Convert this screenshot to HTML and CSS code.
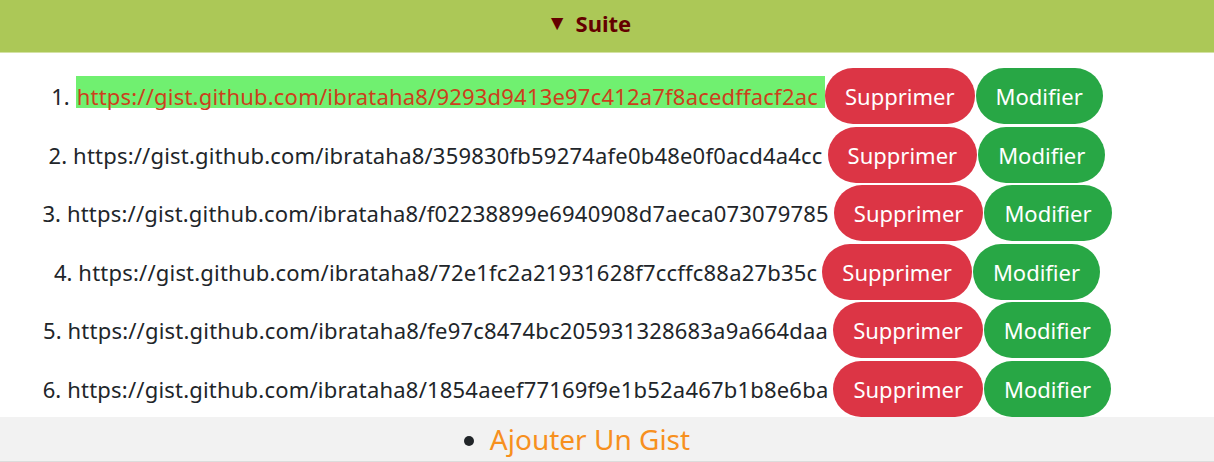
FILE: index.html
```html
<!DOCTYPE html>
<html lang="fr">
<head>
<meta charset="utf-8">
<title>Gists</title>
<link rel="stylesheet" href="styles.css">
</head>
<body>
<header class="bar">
  <span class="bar-title"><span class="caret">▼</span>Suite</span>
</header>
<ol class="gists">
  <li class="gist">
    <span class="num">1.</span>
    <a class="url active" href="#">https://gist.github.com/ibrataha8/9293d9413e97c412a7f8acedffacf2ac</a>
    <button class="btn btn-del">Supprimer</button>
    <button class="btn btn-edit">Modifier</button>
  </li>
  <li class="gist">
    <span class="num">2.</span>
    <span class="url">https://gist.github.com/ibrataha8/359830fb59274afe0b48e0f0acd4a4cc</span>
    <button class="btn btn-del">Supprimer</button>
    <button class="btn btn-edit">Modifier</button>
  </li>
  <li class="gist">
    <span class="num">3.</span>
    <span class="url">https://gist.github.com/ibrataha8/f02238899e6940908d7aeca073079785</span>
    <button class="btn btn-del">Supprimer</button>
    <button class="btn btn-edit">Modifier</button>
  </li>
  <li class="gist">
    <span class="num">4.</span>
    <span class="url">https://gist.github.com/ibrataha8/72e1fc2a21931628f7ccffc88a27b35c</span>
    <button class="btn btn-del">Supprimer</button>
    <button class="btn btn-edit">Modifier</button>
  </li>
  <li class="gist">
    <span class="num">5.</span>
    <span class="url">https://gist.github.com/ibrataha8/fe97c8474bc205931328683a9a664daa</span>
    <button class="btn btn-del">Supprimer</button>
    <button class="btn btn-edit">Modifier</button>
  </li>
  <li class="gist">
    <span class="num">6.</span>
    <span class="url">https://gist.github.com/ibrataha8/1854aeef77169f9e1b52a467b1b8e6ba</span>
    <button class="btn btn-del">Supprimer</button>
    <button class="btn btn-edit">Modifier</button>
  </li>
</ol>
<footer class="add">
  <span class="dot"></span>
  <a class="add-link" href="#">Ajouter Un Gist</a>
</footer>
</body>
</html>
```
FILE: styles.css
```css
* { box-sizing: border-box; }
html, body { margin: 0; padding: 0; }
body {
  font-family: "Noto Sans", "Open Sans", sans-serif;
  color: #212529;
  background: #fff;
}
.bar {
  height: 53px;
  background: #acc857;
  border-bottom: 1px solid #d4e2a4;
  display: flex;
  align-items: center;
  justify-content: center;
  padding: 0 36px 7px 0;
}
.bar-title {
  font-weight: 700;
  font-size: 22px;
  color: #640000;
  display: flex;
  align-items: center;
}
.caret { font-size: 21px; margin-right: 8px; position: relative; top: -1px; }
.gists {
  list-style: none;
  margin: 0;
  padding: 15px 60px 0 0;
  display: flex;
  flex-direction: column;
  gap: 2.6px;
}
.gist {
  display: flex;
  align-items: center;
  justify-content: center;
  height: 56px;
  font-size: 22px;
  line-height: 32px;
}
.num { margin-right: 6px; }
.url {
  color: #212529;
  text-decoration: none;
  letter-spacing: 0.2px;
  margin-right: 5px;
}
.url.active {
  background: #70f070;
  color: #cc3f1c;
  line-height: 24px;
  padding: 8px 7px 0 1px;
  margin: 0 0 8px 0;
}
.btn {
  font-family: inherit;
  font-size: 22px;
  color: #fff;
  border: none;
  height: 56px;
  border-radius: 28px;
  padding: 0 20px;
  margin: 0;
}
.btn-del { background: #dc3545; }
.btn-edit { background: #28a745; margin-left: 1px; }
.add {
  background: #f2f2f2;
  border-bottom: 1px solid #dcdcdc;
  height: 45px;
  display: flex;
  align-items: center;
  justify-content: center;
  padding-right: 60px;
  font-size: 28px;
}
.dot {
  width: 10px;
  height: 10px;
  border-radius: 50%;
  background: #212529;
  margin: 4px 16px 0 0;
}
.add-link { color: #f7901e; text-decoration: none; }
```
